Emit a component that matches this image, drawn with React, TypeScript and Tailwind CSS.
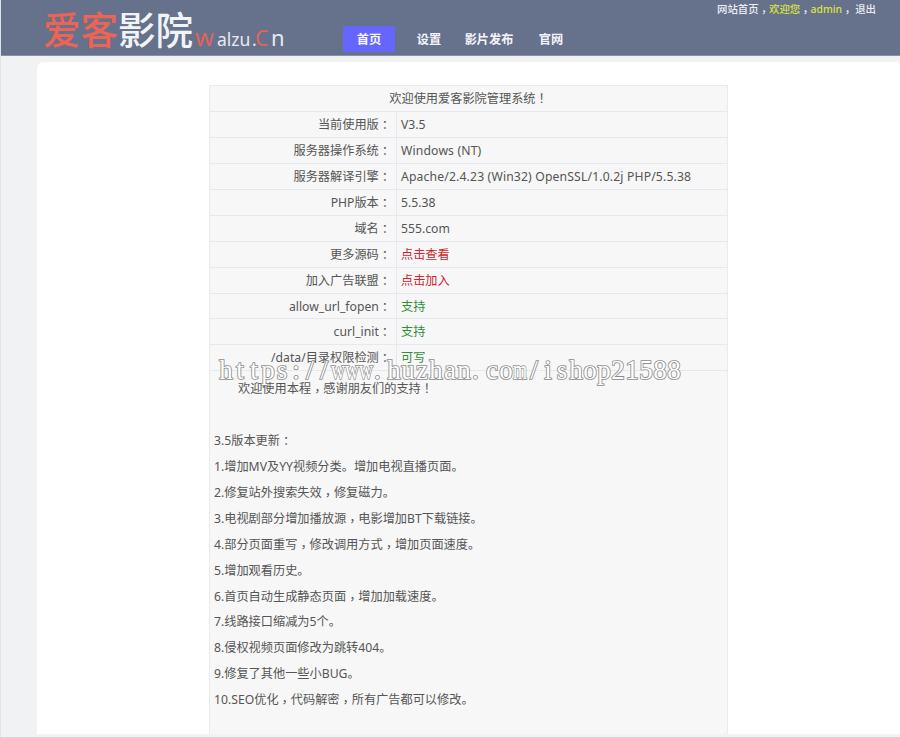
import { Fragment } from 'react';
import clsx from 'clsx';

interface InfoRow {
    label: string;
    value: string;
    tone?: 'red' | 'green';
    wide?: boolean;
}

interface NavItem {
    label: string;
    className: string;
    active?: boolean;
}

const navItems: NavItem[] = [
    { label: '首页', className: 'w-[52px]', active: true },
    { label: '设置', className: 'ml-[8px] w-[52px]' },
    { label: '影片发布', className: 'w-[68px]' },
    { label: '官网', className: 'ml-[2px] w-[52px]' },
];

const infoRows: InfoRow[] = [
    { label: '当前使用版：', value: 'V3.5' },
    { label: '服务器操作系统：', value: 'Windows (NT)', wide: true },
    { label: '服务器解译引擎：', value: 'Apache/2.4.23 (Win32) OpenSSL/1.0.2j PHP/5.5.38', wide: true },
    { label: 'PHP版本：', value: '5.5.38' },
    { label: '域名：', value: '555.com' },
    { label: '更多源码：', value: '点击查看', tone: 'red' },
    { label: '加入广告联盟：', value: '点击加入', tone: 'red' },
    { label: 'allow_url_fopen：', value: '支持', tone: 'green' },
    { label: 'curl_init：', value: '支持', tone: 'green' },
    { label: '/data/目录权限检测：', value: '可写', tone: 'green' },
];

const changelog = [
    '1.增加MV及YY视频分类。增加电视直播页面。',
    '2.修复站外搜索失效，修复磁力。',
    '3.电视剧部分增加播放源，电影增加BT下载链接。',
    '4.部分页面重写，修改调用方式，增加页面速度。',
    '5.增加观看历史。',
    '6.首页自动生成静态页面，增加加载速度。',
    '7.线路接口缩减为5个。',
    '8.侵权视频页面修改为跳转404。',
    '9.修复了其他一些小BUG。',
    '10.SEO优化，代码解密，所有广告都可以修改。',
];

// Commas, colons and exclamation marks sit in the middle of their square.
const Cn = ({ text }: { text: string }) => (
    <>
        {text.split(/([，：！])/).map((part, i) =>
            i % 2 ? (
                <span
                    key={i}
                    lang="zh-TW"
                    className={clsx(
                        "inline-block font-['Noto_Sans_CJK_TC'] leading-none",
                        part === '，' && 'translate-y-[3px]',
                        part === '：' && 'translate-y-[1px]'
                    )}
                >
                    {part}
                </span>
            ) : (
                <Fragment key={i}>{part}</Fragment>
            )
        )}
    </>
);

const Logo = () => (
    <div className="relative ml-[42px] h-[55px] w-[300px] shrink-0 whitespace-nowrap">
        <div className="absolute left-0 top-[4px] text-[37.5px] leading-[52px] font-medium text-[#ee6353]">
            爱客<span className="text-[#f1f4f7]">影院</span>
        </div>
        <div className="absolute left-[152px] top-[23px] flex items-baseline leading-[28px] text-[#e4e9ef]">
            <span className="w-[22px] text-[24px] text-[#e0635c]">w</span>
            <span className="w-[35px] text-[17.5px]">alzu</span>
            <span className="w-[3px] text-[17.5px]">.</span>
            <span className="w-[16px] text-[21px] text-[#e0635c]">C</span>
            <span className="text-[22px]">n</span>
        </div>
    </div>
);

const Header = () => (
    <header className="relative flex h-[56px] shrink-0 border-b border-[#8891a8] bg-[#66718b]">
        <Logo />
        <nav className="mt-[26px] flex h-[26px] text-[12.2px] leading-[27px] font-bold text-[#f4f5fa]">
            {navItems.map(item => (
                <a
                    key={item.label}
                    className={clsx('text-center', item.className, item.active && 'bg-[#6666ff]')}
                >
                    {item.label}
                </a>
            ))}
        </nav>
        <div className="absolute right-[24px] top-0 flex text-[10.4px] leading-[18px] font-medium whitespace-pre text-[#eceef4]">
            <span><Cn text="网站首页，" /></span>
            <span className="text-[#dbe63c]">欢迎您</span>
            <span><Cn text="，" /></span>
            <span className="text-[#dbe63c]">admin</span>
            <span><Cn text="， 退出" /></span>
        </div>
    </header>
);

const InfoTable = () => (
    <div className="ml-[172px] h-[649px] w-[519px] border border-b-0 border-[#ebebee] bg-[#f7f7f7] text-[12.2px] leading-[26px] text-[#555]">
        <div className="h-[25.95px] border-b border-[#e6e7ef] text-center">
            <Cn text="欢迎使用爱客影院管理系统！" />
        </div>
        {infoRows.map(row => (
            <div key={row.label} className="flex h-[25.95px] border-b border-[#e6e7ef]">
                <div className="w-[187px] border-r border-[#e6e7ef] pr-[5px] text-right">
                    <Cn text={row.label} />
                </div>
                <div
                    className={clsx(
                        'pl-[4px]',
                        row.wide && 'tracking-[0.15px]',
                        row.tone === 'red' && 'text-[#d0242c]',
                        row.tone === 'green' && 'text-[#2f8f35]'
                    )}
                >
                    {row.value}
                </div>
            </div>
        ))}
        <div className="pl-[4px] pt-[5px] leading-[25.9px]">
            <p className="pl-[24px]"><Cn text="欢迎使用本程，感谢朋友们的支持！" /></p>
            <p className="mt-[25.9px]"><Cn text="3.5版本更新：" /></p>
            {changelog.map(line => (
                <p key={line}><Cn text={line} /></p>
            ))}
        </div>
    </div>
);

const Watermark = () => (
    <svg className="absolute left-[217px] top-[350px]" width="470" height="40" aria-hidden="true">
        <text
            y="29"
            fontFamily="'Liberation Serif', serif"
            fontSize="27"
            fill="#ffffff"
            stroke="#8c8c8c"
            strokeWidth="1.7"
            paintOrder="stroke"
        >
            <tspan textAnchor="middle" x="8 22 36 50 64 78 92 106">https://</tspan>
            <tspan x="113" textLength="42" lengthAdjust="spacingAndGlyphs">www</tspan>
            <tspan x="156">.</tspan>
            <tspan textAnchor="middle" x="176 190 204 218 232 246">huzhan</tspan>
            <tspan x="254">.</tspan>
            <tspan textAnchor="middle" x="274 288">co</tspan>
            <tspan x="295" textLength="14" lengthAdjust="spacingAndGlyphs">m</tspan>
            <tspan textAnchor="middle" x="316 330 344 358 372 386 400 414 428 442 456">/ishop21588</tspan>
        </text>
    </svg>
);

const App: React.FC = () => {
    return (
        <div
            className="relative flex h-[737px] w-[900px] flex-col overflow-hidden border-l border-[#e0e2e6] bg-[#f1f2f4]"
            style={{ fontFamily: "'Noto Sans', 'Noto Sans CJK SC', sans-serif" }}
        >
            <Header />
            <main className="ml-[36px] mt-[6px] h-[672px] rounded-tl-[6px] rounded-tr-[4px] bg-white pt-[23px]">
                <InfoTable />
            </main>
            <Watermark />
        </div>
    );
};

export default App;
